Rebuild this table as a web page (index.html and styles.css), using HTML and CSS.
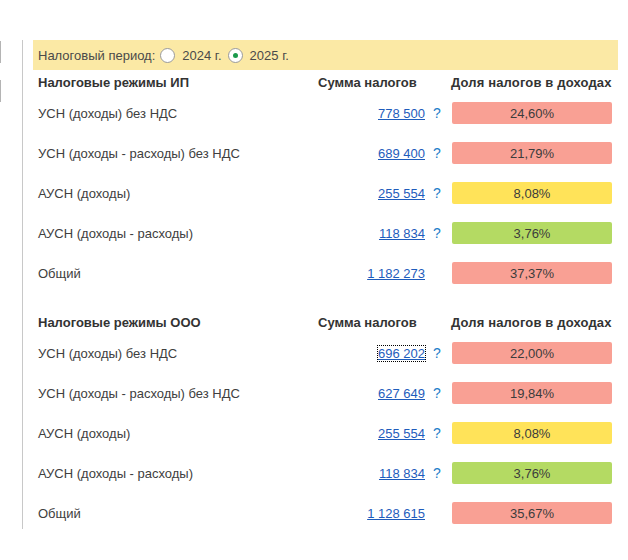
FILE: index.html
```html
<!DOCTYPE html>
<html lang="ru">
<head>
<meta charset="utf-8">
<link rel="stylesheet" href="styles.css">
</head>
<body>
<div class="page">
  <div class="side">
    <span class="stub stub1"></span>
    <span class="stub stub2"></span>
  </div>
  <div class="main">
    <div class="period">
      <span class="period-label">Налоговый период:</span>
      <span class="radio"></span><span class="radio-text">2024 г.</span>
      <span class="radio checked"></span><span class="radio-text">2025 г.</span>
    </div>

    <div class="table">
      <div class="head">
        <div class="h-label">Налоговые режимы ИП</div>
        <div class="h-sum">Сумма налогов</div>
        <div class="h-share">Доля налогов в доходах</div>
      </div>
      <div class="row">
        <div class="label">УСН (доходы) без НДС</div>
        <div class="sum"><a href="#">778 500</a></div>
        <div class="q">?</div>
        <div class="bar red">24,60%</div>
      </div>
      <div class="row">
        <div class="label">УСН (доходы - расходы) без НДС</div>
        <div class="sum"><a href="#">689 400</a></div>
        <div class="q">?</div>
        <div class="bar red">21,79%</div>
      </div>
      <div class="row">
        <div class="label">АУСН (доходы)</div>
        <div class="sum"><a href="#">255 554</a></div>
        <div class="q">?</div>
        <div class="bar yellow">8,08%</div>
      </div>
      <div class="row">
        <div class="label">АУСН (доходы - расходы)</div>
        <div class="sum"><a href="#">118 834</a></div>
        <div class="q">?</div>
        <div class="bar green">3,76%</div>
      </div>
      <div class="row">
        <div class="label">Общий</div>
        <div class="sum"><a href="#">1 182 273</a></div>
        <div class="q"></div>
        <div class="bar red">37,37%</div>
      </div>
    </div>

    <div class="table second">
      <div class="head">
        <div class="h-label">Налоговые режимы ООО</div>
        <div class="h-sum">Сумма налогов</div>
        <div class="h-share">Доля налогов в доходах</div>
      </div>
      <div class="row">
        <div class="label">УСН (доходы) без НДС</div>
        <div class="sum"><a href="#" class="focused">696 202</a></div>
        <div class="q">?</div>
        <div class="bar red">22,00%</div>
      </div>
      <div class="row">
        <div class="label">УСН (доходы - расходы) без НДС</div>
        <div class="sum"><a href="#">627 649</a></div>
        <div class="q">?</div>
        <div class="bar red">19,84%</div>
      </div>
      <div class="row">
        <div class="label">АУСН (доходы)</div>
        <div class="sum"><a href="#">255 554</a></div>
        <div class="q">?</div>
        <div class="bar yellow">8,08%</div>
      </div>
      <div class="row">
        <div class="label">АУСН (доходы - расходы)</div>
        <div class="sum"><a href="#">118 834</a></div>
        <div class="q">?</div>
        <div class="bar green">3,76%</div>
      </div>
      <div class="row">
        <div class="label">Общий</div>
        <div class="sum"><a href="#">1 128 615</a></div>
        <div class="q"></div>
        <div class="bar red">35,67%</div>
      </div>
    </div>
  </div>
</div>
</body>
</html>
```

FILE: styles.css
```css
html, body {
  margin: 0;
  padding: 0;
  background: #ffffff;
}

body {
  font-family: "Liberation Sans", Arial, sans-serif;
  font-size: 13px;
  color: #404040;
}

.page {
  display: flex;
  align-items: flex-start;
  padding-top: 40px;
}

.side {
  width: 22px;
  display: flex;
  flex-direction: column;
}

.stub {
  display: block;
  width: 1px;
  height: 22px;
  background: #b4b4b4;
}

.stub1 {
  margin-top: 1px;
}

.stub2 {
  margin-top: 17px;
}

.main {
  border-left: 1px solid #c8c8c8;
  padding-left: 10px;
  width: 585px;
  height: 489px;
}

.period {
  height: 30px;
  background: #fbe9a5;
  display: flex;
  align-items: center;
  padding-left: 5px;
  color: #4a4a4a;
}

.period-label {
  margin-right: 5px;
}

.radio {
  width: 13px;
  height: 13px;
  border: 1px solid #9a9a9a;
  border-radius: 50%;
  background: #ffffff;
  margin-right: 7px;
  display: inline-flex;
  align-items: center;
  justify-content: center;
  box-sizing: content-box;
}

.radio.checked::after {
  content: "";
  width: 5px;
  height: 5px;
  border-radius: 50%;
  background: #1b9a4c;
}

.radio-text {
  margin-right: 6px;
}

.table {
  display: grid;
  grid-template-columns: 280px 107px 27px 160px;
  padding-left: 5px;
  margin-top: 3px;
}

.table.second {
  margin-top: 20px;
}

.head,
.row {
  display: contents;
}

.h-label,
.h-sum,
.h-share {
  font-weight: bold;
  color: #333333;
  height: 20px;
  line-height: 20px;
  white-space: nowrap;
}

.h-sum {
  grid-column: 2 / 4;
}

.h-share {
  margin-left: -1px;
  letter-spacing: 0.15px;
}

.label,
.sum,
.q,
.bar {
  height: 40px;
  display: flex;
  align-items: center;
  white-space: nowrap;
}

.sum {
  justify-content: flex-end;
}

.sum a {
  color: #1e5cbc;
  text-decoration: underline;
}

.sum a.focused {
  outline: 1px dotted #000000;
  outline-offset: 0;
}

.q {
  color: #1d7dc8;
  padding-left: 8px;
  font-size: 14px;
}

.bar {
  height: 22px;
  margin: 9px 0;
  justify-content: center;
  border-radius: 2px;
  color: #3c3c3c;
}

.red {
  background: #f9a094;
}

.yellow {
  background: #ffe359;
}

.green {
  background: #b4da63;
}
```
